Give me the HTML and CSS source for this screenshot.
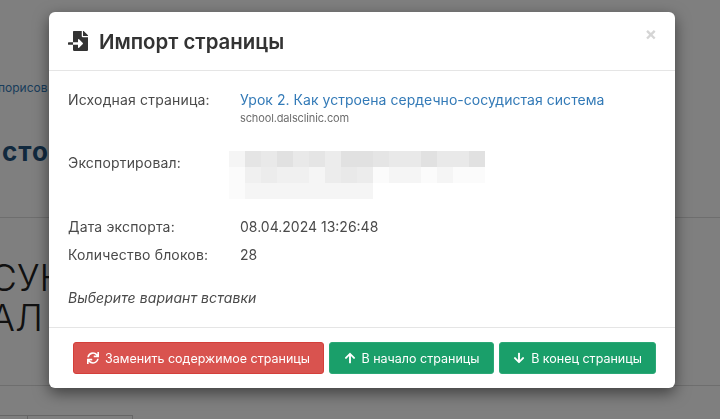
FILE: index.html
```html
<!DOCTYPE html>
<html lang="ru">
<head>
    <meta charset="UTF-8">
    <meta name="viewport" content="width=device-width, initial-scale=1.0">
    <title>Импорт страницы</title>
    <link rel="stylesheet" href="styles.css">
</head>
<body>
    <div class="page">
        <div class="page-crumb">порисов</div>
        <div class="page-title">сто</div>
        <div class="page-rule"></div>
        <div class="page-heading">СУН<br>АЛ</div>
        <div class="page-rule page-rule-low"></div>
        <div class="page-table">
            <div class="page-cell page-cell-small"></div>
            <div class="page-cell page-cell-wide"></div>
        </div>
    </div>

    <div class="backdrop"></div>

    <div class="modal">
        <div class="modal-header">
            <svg class="title-icon" viewBox="0 0 512 512"><path d="M16 288c-8.800 0-16 7.200-16 16v32c0 8.800 7.200 16 16 16h112v-64zm489-183L407.100 7c-4.500-4.500-10.600-7-17-7H384v128h128v-6.100c0-6.300-2.500-12.400-7-16.900zm-153 31V0H152c-13.300 0-24 10.700-24 24v264h128v-65.200c0-14.300 17.300-21.400 27.400-11.300L379 308c6.600 6.700 6.600 17.400 0 24l-95.700 96.400c-10.100 10.100-27.400 3-27.400-11.300V352H128v136c0 13.300 10.700 24 24 24h336c13.300 0 24-10.700 24-24V160H376c-13.200 0-24-10.800-24-24z"/></svg>
            <h1>Импорт страницы</h1>
            <span class="close">×</span>
        </div>

        <div class="modal-body">
            <div class="row row-source">
                <div class="label">Исходная страница:</div>
                <div>
                    <a class="source-link" href="#">Урок 2. Как устроена сердечно-сосудистая система</a>
                    <div class="source-host">school.dalsclinic.com</div>
                </div>
            </div>
            <div class="row row-author">
                <div class="label">Экспортировал:</div>
                <div class="blur">
                    <i class="t1"></i><i class="t5"></i><i class="t4"></i><i class="t6"></i><i class="t4"></i><i class="t5"></i><i class="t3"></i><i class="t6"></i><i class="t6"></i><i class="t5"></i><i class="t4"></i><i class="t4"></i><i class="t6"></i><i class="t4"></i><i class="t4"></i><i class="t6"></i>
                    <i class="t0"></i><i class="t2"></i><i class="t3"></i><i class="t2"></i><i class="t2"></i><i class="t1"></i><i class="t3"></i><i class="t4"></i><i class="t3"></i><i class="t0"></i><i class="t1"></i><i class="t1"></i><i class="t0"></i><i class="t1"></i><i class="t0"></i><i class="t0"></i>
                    <i class="t0"></i><i class="t1"></i><i class="t1"></i><i class="t1"></i><i class="t1"></i><i class="t1"></i><i class="t1"></i><i class="t1"></i><i class="t1"></i>
                </div>
            </div>
            <div class="row row-date">
                <div class="label">Дата экспорта:</div>
                <div class="value">08.04.2024 13:26:48</div>
            </div>
            <div class="row row-count">
                <div class="label">Количество блоков:</div>
                <div class="value">28</div>
            </div>
            <div class="hint">Выберите вариант вставки</div>
        </div>

        <div class="modal-footer">
            <button class="btn btn-danger">
                <svg class="btn-icon" viewBox="0 0 512 512"><path d="M440.650 12.570l4 82.770A247.160 247.160 0 0 0 255.830 8C134.730 8 33.910 94.920 12.290 209.820A12 12 0 0 0 24.090 224h49.050a12 12 0 0 0 11.670-9.260 175.910 175.910 0 0 1 317-56.940l-101.460-4.860a12 12 0 0 0-12.570 12v47.410a12 12 0 0 0 12 12H500a12 12 0 0 0 12-12V12a12 12 0 0 0-12-12h-47.370a12 12 0 0 0-11.980 12.570zM255.830 432a175.610 175.610 0 0 1-146-77.800l101.800 4.870a12 12 0 0 0 12.570-12v-47.400a12 12 0 0 0-12-12H12a12 12 0 0 0-12 12V500a12 12 0 0 0 12 12h47.350a12 12 0 0 0 12-12.600l-4.150-82.570A247.170 247.170 0 0 0 255.830 504c121.110 0 221.930-86.920 243.550-201.820a12 12 0 0 0-11.800-14.180h-49.050a12 12 0 0 0-11.670 9.260A175.860 175.860 0 0 1 255.830 432z"/></svg>
                Заменить содержимое страницы
            </button>
            <button class="btn btn-success">
                <svg class="btn-icon" viewBox="0 0 448 512"><path d="M34.900 289.500l-22.200-22.200c-9.400-9.400-9.400-24.600 0-33.900L207 39c9.400-9.400 24.600-9.400 33.900 0l194.300 194.300c9.400 9.400 9.400 24.600 0 33.900L413 289.400c-9.500 9.500-25 9.300-34.300-.4L264 168.600V456c0 13.300-10.700 24-24 24h-32c-13.300 0-24-10.700-24-24V168.600L69.200 289.100c-9.300 9.800-24.800 10-34.300.4z"/></svg>
                В начало страницы
            </button>
            <button class="btn btn-success">
                <svg class="btn-icon" viewBox="0 0 448 512"><path d="M413.100 222.500l22.200 22.200c9.400 9.400 9.400 24.600 0 33.900L241 473c-9.400 9.400-24.600 9.400-33.900 0L12.700 278.600c-9.400-9.400-9.400-24.600 0-33.900l22.200-22.200c9.500-9.500 25-9.300 34.300.4L184 343.400V56c0-13.300 10.700-24 24-24h32c13.300 0 24 10.700 24 24v287.400l114.800-120.500c9.300-9.800 24.800-10 34.300-.4z"/></svg>
                В конец страницы
            </button>
        </div>
    </div>
</body>
</html>
```

FILE: styles.css
```css
html, body {
    height: 100%;
}

body {
    font-family: Inter, "Noto Sans", Arial, sans-serif;
    background-color: #fff;
    margin: 0;
    overflow: hidden;
}

/* page behind the dialog */
.page {
    height: 419px;
    overflow: hidden;
    white-space: nowrap;
}

.page-crumb {
    margin: 80px 0 0 -2px;
    font-size: 12px;
    line-height: 15px;
    color: #337ab7;
}

.page-title {
    margin: 41px 0 0 2px;
    font-size: 26px;
    line-height: 32px;
    font-weight: 700;
    letter-spacing: 1px;
    color: #23527c;
}

.page-rule {
    margin-top: 49px;
    height: 1px;
    background-color: #ddd;
}

.page-heading {
    margin: 40px 0 0 -10px;
    font-size: 37px;
    line-height: 40px;
    font-weight: 300;
    color: #222;
}

.page-rule-low {
    margin-top: 47px;
}

.page-table {
    display: flex;
    margin-top: 29px;
    height: 40px;
    width: 133px;
    border-top: 1px solid #ccc;
}

.page-cell-small {
    width: 27px;
    border-right: 1px solid #ccc;
}

.page-cell-wide {
    flex: 1;
    border-right: 1px solid #ccc;
}

.backdrop {
    position: fixed;
    inset: 0;
    background-color: rgba(0, 0, 0, 0.5);
}

/* dialog */
.modal {
    position: absolute;
    top: 12px;
    left: 49px;
    width: 626px;
    height: 376px;
    display: flex;
    flex-direction: column;
    background-color: #fff;
    border-radius: 6px;
    box-shadow: 0 5px 15px rgba(0, 0, 0, 0.5);
    color: #333;
}

.modal-header {
    position: relative;
    display: flex;
    align-items: center;
    gap: 11px;
    height: 58px;
    padding: 0 19px;
    border-bottom: 1px solid #e5e5e5;
}

.title-icon {
    width: 20px;
    height: 20px;
    fill: #333;
}

h1 {
    margin: 0;
    font-size: 20.4px;
    font-weight: 600;
    color: #333;
}

.close {
    position: absolute;
    top: 12px;
    right: 18px;
    font-size: 18px;
    line-height: 20px;
    font-weight: 700;
    color: #d5d5d5;
}

.modal-body {
    flex: 1;
    padding: 0 19px;
    font-size: 14px;
    line-height: 20px;
}

.row {
    display: grid;
    grid-template-columns: 172px 1fr;
}

.label {
    letter-spacing: 0.17px;
    color: #4a4a4a;
}

.row-source {
    padding-top: 19px;
}

.source-link {
    letter-spacing: 0.04px;
    color: #337ab7;
    text-decoration: none;
}

.source-host {
    font-size: 11px;
    line-height: 16px;
    letter-spacing: -0.13px;
    color: #6e6e6e;
}

.row-author {
    padding-top: 27px;
}

.blur {
    display: grid;
    grid-template-columns: repeat(16, 16px);
    grid-auto-rows: 16px;
    margin: -2px 0 0 -11px;
}

.t0 { background-color: #fbfbfb; }
.t1 { background-color: #f5f5f5; }
.t2 { background-color: #f0f0f0; }
.t3 { background-color: #ececec; }
.t4 { background-color: #e9e9e9; }
.t5 { background-color: #e5e5e5; }
.t6 { background-color: #e1e1e1; }

.row-date {
    padding-top: 3px;
    margin-top: 15px;
}

.row-count {
    padding-top: 8px;
}

.value {
    color: #4a4a4a;
}

.hint {
    margin-top: 23px;
    font-style: italic;
    letter-spacing: 0.08px;
    color: #4a4a4a;
}

.modal-footer {
    display: flex;
    justify-content: flex-end;
    gap: 5px;
    height: 61px;
    box-sizing: border-box;
    padding: 14px 19px 0 0;
    border-top: 1px solid #e5e5e5;
}

.btn {
    display: flex;
    align-items: center;
    justify-content: center;
    gap: 6px;
    height: 32px;
    padding: 0;
    font-family: inherit;
    font-size: 12.5px;
    color: #fff;
    border: 1px solid transparent;
    border-radius: 3px;
    cursor: pointer;
}

.btn-icon {
    width: 12px;
    height: 12px;
    fill: #fff;
}

.btn-danger {
    width: 251px;
    background-color: #d9534f;
    border-color: #d43f3a;
}

.btn-success {
    width: 165px;
    background-color: #1a9f6a;
    border-color: #2aa876;
}

.btn-success:last-child {
    width: 157px;
}
```
